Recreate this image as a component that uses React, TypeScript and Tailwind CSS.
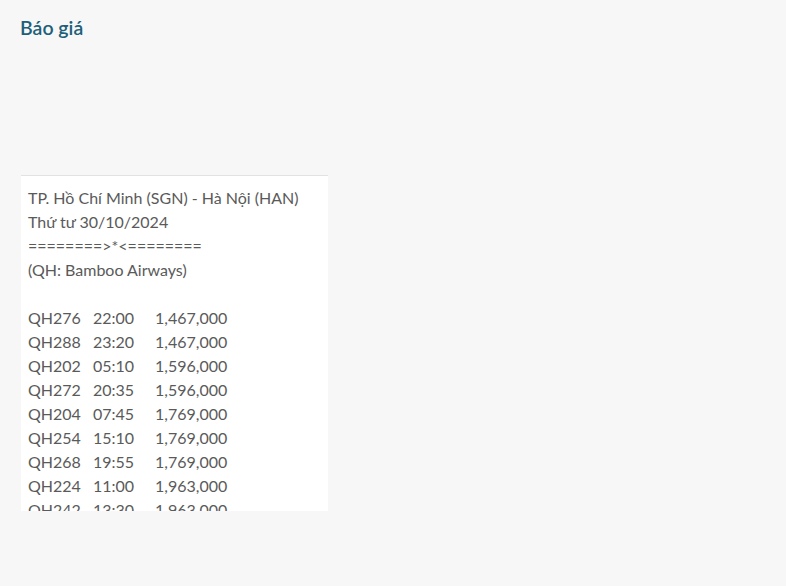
import React from 'react';

const flights = [
    ['QH276', '22:00', '1,467,000'],
    ['QH288', '23:20', '1,467,000'],
    ['QH202', '05:10', '1,596,000'],
    ['QH272', '20:35', '1,596,000'],
    ['QH204', '07:45', '1,769,000'],
    ['QH254', '15:10', '1,769,000'],
    ['QH268', '19:55', '1,769,000'],
    ['QH224', '11:00', '1,963,000'],
    ['QH242', '13:30', '1,963,000'],
    ['QH212', '08:35', '2,112,000'],
];

export default function App() {
    return (
        <div className="min-h-[586px] bg-[#f7f7f7] font-['Lato',sans-serif]">
            <div className="px-5 pt-[14px]">
                {/* Title */}
                <h1 className="text-[19.5px] leading-[28px] font-semibold text-[#1d6079]">Báo giá</h1>

                {/* Quote card */}
                <div className="mt-[133px] ml-px w-[307px] h-[336px] overflow-hidden bg-white border-t border-[#e2e2e2]">
                    <div className="pl-[7px] pt-[10px] text-[16px] leading-[24px] text-[#5a5a5a]">
                        <p>TP. Hồ Chí Minh (SGN) - Hà Nội (HAN)</p>
                        <p>Thứ tư 30/10/2024</p>
                        <p>========&gt;*&lt;========</p>
                        <p>(QH: Bamboo Airways)</p>
                        <p>&nbsp;</p>
                        {flights.map(([code, time, price]) => (
                            <div key={code} className="grid grid-cols-[65px_62px_auto]">
                                <span>{code}</span>
                                <span>{time}</span>
                                <span>{price}</span>
                            </div>
                        ))}
                    </div>
                </div>
            </div>
        </div>
    );
}
